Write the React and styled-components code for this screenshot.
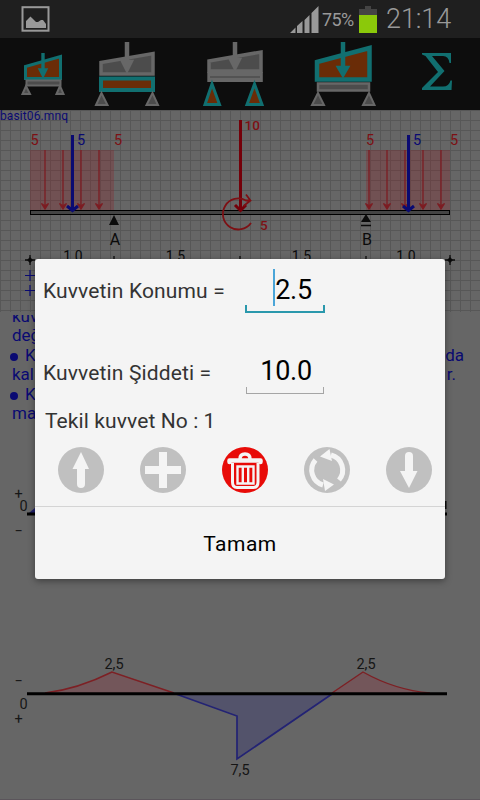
import React from "react";
import styled, { createGlobalStyle } from "styled-components";

const Global = createGlobalStyle`
  * { box-sizing: border-box; }
  body { margin: 0; background: #666; font-family: Roboto, "Noto Sans", sans-serif; }
`;

const C = {
  teal: "#116f70", rust: "#6a2c07", gray: "#676767", dark: "#4c4c4c",
  red: "#7d1014", blue: "#0a0a72", ink: "#0b0b0b",
};

const Screen = styled.div`
  position: relative;
  display: flex;
  flex-direction: column;
  width: 480px;
  height: 800px;
  overflow: hidden;
  background: #666;
`;
const StatusBar = styled.header`
  display: flex;
  align-items: center;
  height: 38px;
  padding: 0 26px 0 21px;
  background: #1f1f1f;
  color: #999;
`;
const StatusRight = styled.div`
  display: flex;
  align-items: center;
  margin-left: auto;
`;
const Percent = styled.span`
  width: 33px;
  margin: 2px 4px 0 3px;
  font-size: 18px;
  line-height: 20px;
  letter-spacing: -0.6px;
  white-space: nowrap;
`;
const Clock = styled.span`
  width: 68px;
  margin-left: 9px;
  font-size: 27px;
  line-height: 38px;
  letter-spacing: -0.1px;
  font-weight: 300;
  white-space: nowrap;
`;
const Toolbar = styled.nav`
  display: grid;
  grid-template-columns: 90px 100px 104px 110px 76px;
  height: 72px;
  background: #0d0d0d;
`;
const Tool = styled.button`
  padding: 0;
  border: 0;
  background: none;
  svg { display: block; }
`;
const Sheet = styled.svg`
  display: block;
  flex: none;
  font-family: Roboto, sans-serif;
`;
const Notes = styled.section`
  display: flex;
  flex-direction: column;
  flex: none;
  height: 110px;
  padding: 0 16px 0 12px;
  overflow: hidden;
  color: ${C.blue};
  font-size: 17px;
`;
const NoteLine = styled.div`
  display: flex;
  justify-content: space-between;
  align-items: flex-end;
  flex: none;
  height: ${(p) => p.$h || 19.5}px;
  padding-right: ${(p) => p.$end || 0}px;
  overflow: hidden;
  line-height: 19.5px;
  white-space: pre;
`;
const Bullet = styled.i`
  display: inline-block;
  width: 8px;
  height: 8px;
  margin-right: 7px;
  border-radius: 50%;
  background: ${C.blue};
`;
const BulletLine = styled(NoteLine)`
  margin-left: -2px;
`;
const Dialog = styled.section`
  position: absolute;
  left: 35px;
  top: 259px;
  display: flex;
  flex-direction: column;
  width: 410px;
  height: 320px;
  border-radius: 3px;
  background: #f4f4f4;
  box-shadow: 0 2px 7px rgba(0, 0, 0, 0.4);
  color: #333;
`;
const Field = styled.label`
  display: flex;
  height: ${(p) => p.$h}px;
  padding-left: 8px;
`;
const FieldName = styled.span`
  width: 202px;
  padding-top: ${(p) => p.$top}px;
  font-size: 21px;
  line-height: 25px;
  letter-spacing: 0.14px;
  white-space: nowrap;
`;
const Entry = styled.span`
  position: relative;
  display: flex;
  justify-content: flex-end;
  width: 80px;
  height: 54px;
  padding: 14px 13px 0 0;
  color: #000;
  font-size: 27px;
  line-height: 34px;
  letter-spacing: -0.2px;
  &::after {
    content: "";
    position: absolute;
    left: ${(p) => (p.$active ? 0 : 1)}px;
    right: ${(p) => (p.$active ? 0 : 1)}px;
    bottom: 0;
    height: 6px;
    border: solid ${(p) => (p.$active ? "#2a98ac" : "#a5a5a5")};
    border-width: ${(p) => (p.$active ? "0 2px 2px" : "0 1px 1px")};
  }
`;
const Caret = styled.i`
  width: 2px;
  height: 37px;
  margin-top: -4px;
  background: #4aa5d8;
`;
const Caption = styled.div`
  height: 26px;
  padding: 1px 0 0 10px;
  font-size: 21px;
  line-height: 25px;
  letter-spacing: 0.1px;
`;
const Actions = styled.div`
  display: flex;
  justify-content: space-between;
  height: 72px;
  padding: 13px 13px 0 23px;
`;
const RoundButton = styled.button`
  width: 46px;
  height: 46px;
  padding: 0;
  border: 0;
  border-radius: 50%;
  background: ${(p) => (p.$danger ? "#e80b08" : "#c0c0c0")};
  svg { display: block; }
`;
const Confirm = styled.button`
  flex: 1;
  padding: 1px 0 0;
  border: 0;
  border-top: 1px solid #d4d4d4;
  border-radius: 0 0 3px 3px;
  background: none;
  color: #000;
  font: 21px Roboto, sans-serif;
  letter-spacing: 0.5px;
`;

const Foot = ({ points, on }) => (
  <polygon points={points} fill={on ? C.rust : C.dark} stroke={on ? C.teal : C.gray} strokeWidth={on ? 3 : 2} />
);
/* Each tool icon lights up the part of the structure it edits. */
const LoadIcon = () => (
  <svg width="90" height="72">
    <path d="M25.500 28.500 60.500 18.500V40.500H25.500Z" fill={C.rust} stroke={C.teal} strokeWidth="3" />
    <path d="M43 15V32M40.500 32 43 37 45.500 32Z" fill={C.teal} stroke={C.teal} strokeWidth="3.4" />
    <rect x="26.500" y="42.500" width="34" height="5" fill={C.dark} stroke={C.gray} strokeWidth="2" />
    <Foot points="22.5,56 26,48 30,56" /><Foot points="56.5,56 60,48 63.5,56" />
  </svg>
);
const BeamIcon = () => (
  <svg width="100" height="72">
    <path d="M11 24.5 63 15.5V36H11Z" fill={C.dark} stroke={C.gray} strokeWidth="3.5" />
    <path d="M37 4V24M33.5 24 37 31 40.5 24Z" fill={C.gray} stroke={C.gray} strokeWidth="4.5" />
    <rect x="11" y="40.500" width="52" height="11.500" fill={C.rust} stroke={C.teal} strokeWidth="4" />
    <Foot points="6,67 11.500,55 17.500,67" /><Foot points="56.500,67 62.500,55 68,67" />
  </svg>
);
const SupportIcon = () => (
  <svg width="104" height="72">
    <path d="M19 23 71 14V33H19Z" fill={C.dark} stroke={C.gray} strokeWidth="3.5" />
    <path d="M45 4V22M41.500 22 45 29 48.500 22Z" fill={C.gray} stroke={C.gray} strokeWidth="4.5" />
    <rect x="17.300" y="34" width="55.500" height="10" fill={C.gray} />
    <path d="M20 39H70" stroke={C.dark} strokeWidth="1.500" />
    <Foot on points="15,66.500 22,46 29.500,66.500" /><Foot on points="57,66.500 64.500,46 72,66.500" />
  </svg>
);
const FrameIcon = () => (
  <svg width="110" height="72">
    <path d="M23 24 75.500 10V41.500H23Z" fill={C.rust} stroke={C.teal} strokeWidth="4.5" />
    <path d="M49 4V30M45.500 30 49 36 52.500 30Z" fill={C.teal} stroke={C.teal} strokeWidth="4.5" />
    <rect x="24" y="45.500" width="51" height="7" fill={C.dark} stroke={C.gray} strokeWidth="2.500" />
    <Foot points="18,67 24,55 30,67" /><Foot points="69,67 75,55 80.500,67" />
  </svg>
);
const SigmaIcon = () => (
  <svg width="76" height="72">
    <path d="M18 15H47V25H45.500Q44.500 18 39 18H28L40.500 33 26 48.500H39Q45 48.500 46.500 42.500H48L47.500 52H18V50L34 34 21.500 18 18 16.500Z" fill={C.teal} />
  </svg>
);
const PictureIcon = () => (
  <svg width="29" height="26">
    <rect x="1.500" y="1.200" width="26" height="23.500" fill="none" stroke="#999" strokeWidth="2" />
    <path d="M5 22V15L8 12 9.500 10.500 11 12 15 16 17 16 20 14 22 14 25 18V22Z" fill="#999" />
  </svg>
);
const SignalIcon = () => (
  <svg width="29" height="27">
    <path d="M0 27 5.500 21.500V27ZM7 20 12.500 15V27H7ZM14.500 14 19.500 9V27H14.500ZM21.500 7 28.500 0V27H21.500Z" fill="#999" />
  </svg>
);
const BatteryIcon = () => (
  <svg width="18" height="27">
    <path d="M6 0H12V3H18V9H0V3H6Z" fill="#444" />
    <rect y="9" width="18" height="18" fill="#8bc90a" />
  </svg>
);

const BeamSheet = () => {
  const loads = [45, 63, 81, 99, 369, 387, 405, 423, 441];
  return (
    <Sheet width="480" height="205" viewBox="0 110 480 205">
      <defs>
        <pattern id="grid" width="10" height="10" patternUnits="userSpaceOnUse">
          <path d="M.5 0V10M0 .5H10" stroke="#575757" strokeWidth="1" fill="none" />
        </pattern>
      </defs>
      <rect y="110" width="480" height="202" fill="url(#grid)" />
      <g fill="#8c2229" fillOpacity=".3">
        <rect x="30" y="150" width="84" height="60" /><rect x="366" y="150" width="84" height="60" />
      </g>
      <g stroke="#7c1c22" strokeWidth="1.300" fill="#7c1c22">
        {loads.map((x) => <path key={x} d={`M${x} 150V208M${x - 3.5} 203.500 ${x} 209 ${x + 3.5} 203.500L${x} 206Z`} />)}
      </g>
      <rect x="30.500" y="210.500" width="419" height="4" fill="#444" stroke="#000" />
      <g fill="none" strokeWidth="3">
        <path d="M72.500 135V209M67 206 72.500 210.500 78 206M408.500 135V209M403 206 408.500 210.500 414 206" stroke={C.blue} />
        <path d="M240.500 120V209M235 205 240.500 210.500 246 205" stroke="#740009" />
        <path d="M250 200.500H246A15.500 15.500 0 1 0 251 223M243.500 206 250.500 200.500 246 194.500" stroke={C.red} strokeWidth="1.800" />
      </g>
      <path d="M109 225 114 215 119 225ZM361 222 366 214 371 222Z" fill={C.ink} />
      <path d="M361 225.500H371M25 260H35M30 255V265M445 260H455M450 255V265M114 256V260M240 256V260M366 256V260" stroke={C.ink} strokeWidth="1.300" />
      <path d="M27 260 30 257 33 260 30 263ZM447 260 450 257 453 260 450 263Z" fill={C.ink} />
      <path d="M25 275.500H35M30 270V281M25 290.500H35M30 285V296" stroke={C.blue} strokeWidth="1.200" />
      <g fontSize="14.500" fill={C.red}>
        <text x="30.500" y="145">5</text><text x="114" y="145">5</text><text x="366" y="145">5</text><text x="450" y="145">5</text>
        <g fontWeight="500" fontSize="13.500"><text x="244.500" y="130">10</text><text x="260" y="230">5</text></g>
      </g>
      <g fill={C.blue}>
        <text x="0" y="120" fontSize="12" textLength="68">basit06.mnq</text>
        <text x="77" y="145" fontSize="14.500">5</text><text x="413" y="145" fontSize="14.500">5</text>
      </g>
      <g fill={C.ink} fontSize="16" textAnchor="middle">
        <text x="115" y="245">A</text><text x="367" y="245">B</text>
        <g fontSize="14"><text x="73" y="260.500">1.0</text><text x="175.500" y="260.500">1.5</text><text x="301.500" y="260.500">1.5</text><text x="406" y="260.500">1.0</text></g>
      </g>
    </Sheet>
  );
};

const ResultSheet = () => (
  <Sheet width="480" height="375" viewBox="0 425 480 375">
    <g fill="#171717" fontSize="14.500">
      <text x="14.500" y="498.500">+</text><text x="19.500" y="511">0</text><text x="14.500" y="535.500">−</text>
      <text x="14.500" y="686">−</text><text x="19.500" y="709">0</text><text x="14.500" y="724">+</text>
    </g>
    <path d="M29 513 36 507V513Z" fill="#20206c" />
    <path d="M27 514H447" stroke="#000" strokeWidth="3" />
    <path d="M445 501V509" stroke={C.ink} strokeWidth="3" />
    <path d="M45 693Q78 689 112 672L174 693ZM332 693 363 672Q395 690 430 693Z" fill="#73565a" />
    <path d="M45 693Q78 689 112 672L174 693M332 693 363 672Q395 690 430 693" fill="none" stroke="#7d2024" strokeWidth="1.400" />
    <path d="M176 694 237 716V759L332 694Z" fill="#53536b" />
    <path d="M176 694 237 716V759L332 694" fill="none" stroke="#232374" strokeWidth="1.700" />
    <path d="M27 693.700H447" stroke="#000" strokeWidth="3" />
    <g fill="#151515" fontSize="14.500" textAnchor="middle">
      <text x="114" y="669">2,5</text><text x="366" y="669">2,5</text><text x="240" y="775">7,5</text>
    </g>
    <path d="M0 799.500H480" stroke="#5b555b" />
  </Sheet>
);

const UpIcon = () => (
  <svg width="46" height="46"><path d="M23 5 31 22H27V37Q27 41 23 41 19 41 19 37V22H14.500Z" fill="#f4f4f4" /></svg>
);
const DownIcon = () => (
  <svg width="46" height="46"><path d="M23 41 31.500 24H27V9Q27 5 23 5 19 5 19 9V24H14Z" fill="#f4f4f4" /></svg>
);
const PlusIcon = () => (
  <svg width="46" height="46"><path d="M19 5H27V19H41V27H27V41H19V27H5V19H19Z" fill="#f4f4f4" /></svg>
);
const CycleIcon = () => (
  <svg width="46" height="46">
    <path d="M27 8A15.500 15.500 0 0 1 35 33M19 38A15.500 15.500 0 0 1 11.500 13" fill="none" stroke="#f4f4f4" strokeWidth="5" />
    <path d="M25.500 2 16 9.500 28 14ZM21 44 30 37.500 19 32Z" fill="#f4f4f4" />
  </svg>
);
const TrashIcon = () => (
  <svg width="46" height="46" fill="none" stroke="#f4f4f4">
    <path d="M7.500 15V13.500H38.500V15" strokeWidth="4.500" strokeLinecap="round" strokeLinejoin="round" />
    <path d="M18 12Q18 7 23 7 28 7 28 12" strokeWidth="3.500" />
    <path d="M10.500 16V35Q10.500 40.500 15 40.500H31.500Q36 40.500 36 35V16" strokeWidth="3" />
    <path d="M15.500 19.500H31.500V36.500H15.500ZM20.800 20V36M26.200 20V36" strokeWidth="2.400" />
  </svg>
);

export default function App() {
  return (
    <Screen>
      <Global />
      <StatusBar>
        <PictureIcon />
        <StatusRight>
          <SignalIcon /><Percent>75%</Percent><BatteryIcon /><Clock>21:14</Clock>
        </StatusRight>
      </StatusBar>
      <Toolbar>
        <Tool><LoadIcon /></Tool><Tool><BeamIcon /></Tool><Tool><SupportIcon /></Tool>
        <Tool><FrameIcon /></Tool><Tool><SigmaIcon /></Tool>
      </Toolbar>
      <BeamSheet />
      <Notes>
        <NoteLine $h={11}>kuv</NoteLine>
        <NoteLine>değ</NoteLine>
        <BulletLine><span><Bullet />K</span><span>da</span></BulletLine>
        <NoteLine $end={8}><span>kal</span><span>r.</span></NoteLine>
        <BulletLine><span><Bullet />K</span></BulletLine>
        <NoteLine>ma</NoteLine>
      </Notes>
      <ResultSheet />
      <Dialog>
        <Field $h={81}>
          <FieldName $top={20}>Kuvvetin Konumu =</FieldName>
          <Entry $active><Caret />2.5</Entry>
        </Field>
        <Field $h={68}>
          <FieldName $top={21}>Kuvvetin Şiddeti =</FieldName>
          <Entry>10.0</Entry>
        </Field>
        <Caption>Tekil kuvvet No : 1</Caption>
        <Actions>
          <RoundButton><UpIcon /></RoundButton>
          <RoundButton><PlusIcon /></RoundButton>
          <RoundButton $danger><TrashIcon /></RoundButton>
          <RoundButton><CycleIcon /></RoundButton>
          <RoundButton><DownIcon /></RoundButton>
        </Actions>
        <Confirm>Tamam</Confirm>
      </Dialog>
    </Screen>
  );
}
